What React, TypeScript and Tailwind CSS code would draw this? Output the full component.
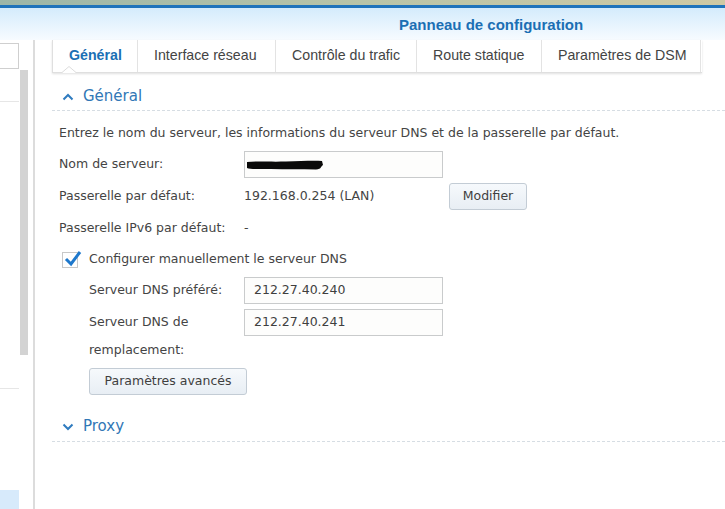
import React from 'react'

const body = { fontFamily: '"DejaVu Sans", Verdana, sans-serif' }
const narrow = { fontFamily: '"Liberation Sans", Arial, sans-serif' }

function Chevron({ up }: { up?: boolean }) {
  return (
    <svg width="12" height="8" viewBox="0 0 12 8" className="shrink-0">
      <path
        d={up ? 'M1.5 6.5 L6 2 L10.5 6.5' : 'M1.5 1.5 L6 6 L10.5 1.5'}
        fill="none"
        stroke="#2f7bbf"
        strokeWidth="2"
      />
    </svg>
  )
}

function Field({ value, children }: { value?: string; children?: React.ReactNode }) {
  return (
    <div className="w-[199px] h-[27px] border border-[#c9cbcc] bg-[#fdfdfc] flex items-center pl-[9px] text-[12.5px] text-[#3f3f3f] shrink-0">
      {value}
      {children}
    </div>
  )
}

function Button({ label, w }: { label: string; w: string }) {
  return (
    <button
      className={`${w} h-[27px] border border-[#c3ccd5] rounded-[3px] bg-gradient-to-b from-[#f6f9fc] to-[#e8eef4] text-[12.5px] text-[#3f3f3f] shrink-0`}
    >
      {label}
    </button>
  )
}

const tabs = ['Général', 'Interface réseau', 'Contrôle du trafic', 'Route statique', 'Paramètres de DSM']
const tabW = ['w-[85px]', 'w-[138px]', 'w-[141px]', 'w-[125px]', 'w-[159px]']

export default function App() {
  return (
    <div className="w-[725px] h-[509px] overflow-hidden bg-white text-[#444]" style={body}>
      {/* window header */}
      <div className="h-[5px] bg-gradient-to-r from-[#9cb6a8] via-[#b9c4a8] to-[#cfc9a4]" />
      <div className="h-[3px] bg-[#1f73bb]" />
      <div className="h-[32px] bg-gradient-to-b from-[#d4ebfc] to-[#f7fbff] flex items-center">
        <div className="w-[399px]" />
        <span className="text-[15px] font-bold text-[#1b6fb4] mt-[2px]" style={narrow}>
          Panneau de configuration
        </span>
      </div>

      <div className="flex h-[469px]">
        {/* left list */}
        <div className="w-[35px] shrink-0 bg-white border-r-2 border-[#dcdcdc] flex">
          <div className="w-[19px] flex flex-col">
            <div className="h-[3px]" />
            <div className="h-[26px] border border-l-0 border-[#cfcfcf] bg-white" />
            <div className="h-[32px]" />
            <div className="h-px bg-[#e6e6e6]" />
            <div className="h-[286px]" />
            <div className="h-px bg-[#e6e6e6]" />
            <div className="flex-1" />
            <div className="h-[19px] bg-[#d7eafb]" />
          </div>
          <div className="w-[8px] flex flex-col ml-[1px]">
            <div className="h-[30px]" />
            <div className="h-[285px] bg-[#d3d3d3]" />
          </div>
        </div>

        {/* main */}
        <div className="flex-1 pl-[17px]">
          {/* tabs */}
          <div className="relative h-[33px] w-[650px] border-l border-b border-[#dfdfdf] shadow-[0_1px_2px_rgba(0,0,0,0.12)] flex items-stretch" style={narrow}>
            {tabs.map((t, i) => (
              <div
                key={t}
                className={`${tabW[i]} flex items-center pl-[16px] border-r border-[#e3e3e3] text-[14.2px] ${
                  i === 0 ? 'font-bold text-[#1b6fb4]' : 'text-[#444]'
                }`}
              >
                {t}
              </div>
            ))}
            <svg className="absolute left-[9px] bottom-[-1px]" width="14" height="7" viewBox="0 0 14 7">
              <path d="M0 6.5 L7 0.5 L14 6.5" fill="white" stroke="#dcdcdc" />
              <rect x="0.8" y="6" width="12.4" height="1" fill="white" />
            </svg>
          </div>

          {/* section general */}
          <div className="h-[38px] flex items-center gap-[9px] pl-[10px] pt-[10px] border-b border-dashed border-[#d6dde3]">
            <Chevron up />
            <span className="text-[15px] text-[#3177b6]">Général</span>
          </div>

          <div className="pl-[7px]">
            <div className="h-[31px] pt-[13px] flex items-center text-[12.5px]">
              Entrez le nom du serveur, les informations du serveur DNS et de la passerelle par défaut.
            </div>

            <div className="mt-[9px] flex items-center h-[27px] text-[12.5px]">
              <div className="w-[185px]">Nom de serveur:</div>
              <Field>
                <svg width="78" height="12" viewBox="0 0 78 12" className="-ml-[8px]">
                  <path
                    d="M1 3 C10 2 25 3 40 2.5 C55 2 68 1.5 76 2 L77 6 C74 8 76 10 70 10.5 C55 10 40 10.5 25 10 C12 10 4 10.5 1 9 Z"
                    fill="#0a0a0a"
                  />
                </svg>
              </Field>
            </div>

            <div className="mt-[5px] flex items-center h-[27px] text-[12.5px]">
              <div className="w-[185px]">Passerelle par défaut:</div>
              <div className="w-[205px]">192.168.0.254 (LAN)</div>
              <Button label="Modifier" w="w-[78px]" />
            </div>

            <div className="mt-[5px] flex items-center h-[27px] text-[12.5px]">
              <div className="w-[185px]">Passerelle IPv6 par défaut:</div>
              <div>-</div>
            </div>

            <div className="mt-[4px] flex items-center h-[27px] text-[12.5px]">
              <div className="w-[30px] pl-[3px]">
                <div className="relative w-[16px] h-[16px] border border-[#c8c8c8] bg-white">
                  <svg className="absolute left-[1px] top-[-3px]" width="18" height="17" viewBox="0 0 18 17">
                    <path d="M2 9 L7 14 L16 2" fill="none" stroke="#1e78cc" strokeWidth="3" />
                  </svg>
                </div>
              </div>
              <div>Configurer manuellement le serveur DNS</div>
            </div>

            <div className="pl-[30px]">
              <div className="mt-[4px] flex items-center h-[27px] text-[12.5px]">
                <div className="w-[155px]">Serveur DNS préféré:</div>
                <Field value="212.27.40.240" />
              </div>
              <div className="mt-[5px] flex items-start text-[12.5px]">
                <div className="w-[155px] leading-[28px] -mt-[1px]">
                  Serveur DNS de
                  <br />
                  remplacement:
                </div>
                <Field value="212.27.40.241" />
              </div>
              <div className="mt-[4px]">
                <Button label="Paramètres avancés" w="w-[158px]" />
              </div>
            </div>
          </div>

          {/* section proxy */}
          <div className="mt-[17px] h-[30px] flex items-center gap-[9px] pl-[10px] border-b border-dashed border-[#d6dde3]">
            <Chevron />
            <span className="text-[15px] text-[#3177b6]">Proxy</span>
          </div>
        </div>
      </div>
    </div>
  )
}
